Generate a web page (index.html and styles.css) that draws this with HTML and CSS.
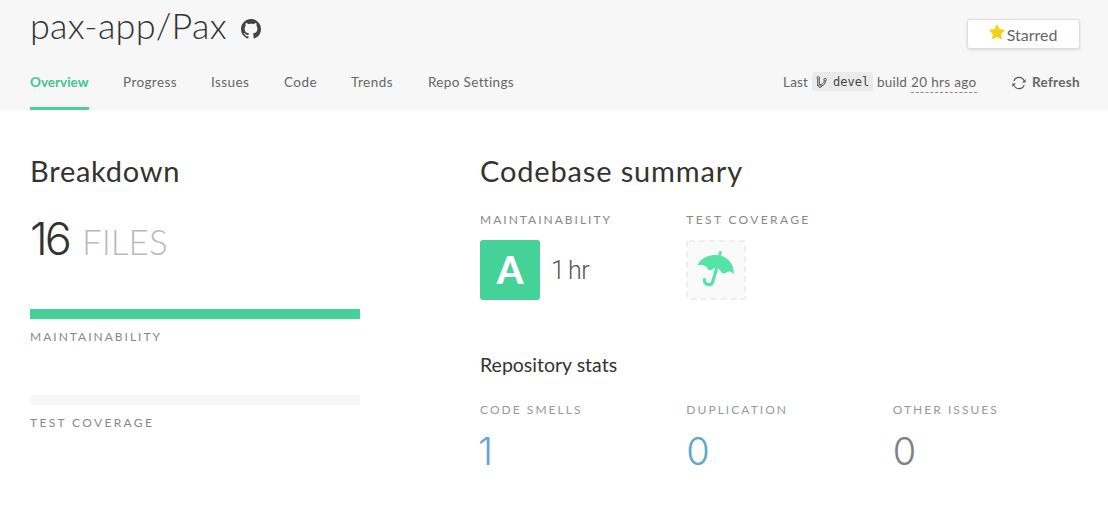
FILE: index.html
```html
<!DOCTYPE html>
<html lang="en">
<head>
<meta charset="utf-8">
<title>pax-app/Pax</title>
<link rel="stylesheet" href="styles.css">
</head>
<body>
<header class="header">
  <div class="title-row">
    <h1 class="repo"><span class="repo-name">pax-app/Pax</span>
      <svg class="github" viewBox="0 0 16 16"><path fill="#444" d="M8 0C3.58 0 0 3.58 0 8c0 3.54 2.29 6.53 5.47 7.59.4.07.55-.17.55-.38 0-.19-.01-.82-.01-1.49-2.01.37-2.53-.49-2.69-.94-.09-.23-.48-.94-.82-1.13-.28-.15-.68-.52-.01-.53.63-.01 1.08.58 1.23.82.72 1.21 1.87.87 2.33.66.07-.52.28-.87.51-1.07-1.78-.2-3.64-.89-3.64-3.95 0-.87.31-1.59.82-2.15-.08-.2-.36-1.02.08-2.12 0 0 .67-.21 2.2.82.64-.18 1.32-.27 2-.27s1.36.09 2 .27c1.53-1.04 2.2-.82 2.2-.82.44 1.1.16 1.92.08 2.12.51.56.82 1.27.82 2.15 0 3.07-1.87 3.75-3.65 3.95.29.25.54.73.54 1.48 0 1.07-.01 1.93-.01 2.2 0 .21.15.46.55.38A8.01 8.01 0 0 0 16 8c0-4.42-3.58-8-8-8z"/></svg>
    </h1>
    <button class="starred"><svg class="star" viewBox="0 0 16 16"><path fill="#f3d012" stroke="#f3d012" stroke-width="1.2" stroke-linejoin="round" d="M8 1.2l2.1 4.5 4.9.6-3.6 3.4.9 4.9L8 12.2l-4.3 2.4.9-4.9L1 6.3l4.9-.6z"/></svg><span>Starred</span></button>
  </div>
  <div class="nav-row">
    <nav class="tabs">
      <a class="tab active">Overview</a><a class="tab progress">Progress</a><a class="tab issues">Issues</a><a class="tab code">Code</a><a class="tab trends">Trends</a><a class="tab settings">Repo Settings</a>
    </nav>
    <div class="build">
      <span class="last">Last</span>
      <span class="branch"><svg class="fork" viewBox="0 0 11 12" fill="none" stroke="#555" stroke-width="1"><circle cx="2.300" cy="1.900" r="1.300"/><circle cx="9.100" cy="3.700" r="1.300"/><circle cx="4" cy="10" r="1.400"/><path d="M1.700 3.200V10M3.300 3.200V8.700M9.400 5C9.400 8.200 7.600 9.300 5.400 10M8.200 5C7.800 7.300 6.400 8 4.600 8.700"/></svg>devel</span>
      <span class="word">build</span>
      <span class="ago">20 hrs ago</span>
      <a class="refresh"><svg class="cycle" viewBox="0 0 14 14" fill="none" stroke="#555" stroke-width="1.1"><path d="M1.800 5A5.500 5.500 0 0 1 12 4.600M12.200 9A5.500 5.500 0 0 1 2 9.400"/><path fill="#555" stroke="none" d="M13.600 2.900v3.500h-3.600zM.4 11.100V7.600H4z"/></svg><span>Refresh</span></a>
    </div>
  </div>
</header>
<main class="main">
  <section class="breakdown">
    <h2 class="heading">Breakdown</h2>
    <p class="files"><span class="count">16</span><span class="unit">FILES</span></p>
    <div class="bar full"></div>
    <p class="label maint">MAINTAINABILITY</p>
    <div class="bar"></div>
    <p class="label cov">TEST COVERAGE</p>
  </section>
  <section class="summary">
    <h2 class="heading codebase">Codebase summary</h2>
    <div class="grid">
      <div>
        <p class="label maint">MAINTAINABILITY</p>
        <div class="rating"><span class="grade">A</span><span class="time">1 hr</span></div>
      </div>
      <div>
        <p class="label cov">TEST COVERAGE</p>
        <div class="umbrella-box"><svg viewBox="0 0 60 60" width="60" height="60"><rect x="1" y="1" width="58" height="58" rx="2" fill="#fafafa" stroke="#eee" stroke-width="2" stroke-dasharray="6 4"/><path fill="#55e3a7" d="M11.300 25.500C15 17.500 23 14 32.500 15.200l.4-1.700a1.600 1.600 0 1 1 2.300.6l-.4 1.700C43.500 18.500 48.500 25.500 47.700 34.500 46 31.500 43.500 30.700 40.500 32.500 38.500 34 36.500 34 35.300 32.300 33.500 28 29.500 26.600 26.500 29.300 24.500 31 22.500 30.500 21.500 28.300 19.500 24.500 14.500 23.800 11.300 25.500z"/><path fill="none" stroke="#55e3a7" stroke-width="3.200" stroke-linecap="round" d="M30.300 29.500L26.700 41.800C25.300 46.300 18 45.300 18.500 39.500"/></svg></div>
      </div>
    </div>
    <h3 class="subheading">Repository stats</h3>
    <div class="grid">
      <div><p class="label light smells">CODE SMELLS</p><p class="stat one">1</p></div>
      <div><p class="label light dup">DUPLICATION</p><p class="stat">0</p></div>
      <div><p class="label light other">OTHER ISSUES</p><p class="stat gray">0</p></div>
    </div>
  </section>
</main>
</body>
</html>
```

FILE: styles.css
```css
* { box-sizing: border-box; }
body { margin: 0; background: #fff; color: #333; font-family: Lato, "Open Sans", sans-serif; font-size: 13.5px; }
h1, h2, h3, p { margin: 0; font-weight: 400; white-space: nowrap; }
.header { height: 110px; background: #f7f7f7; padding: 0 28px 0 30px; }
.title-row { height: 55px; display: flex; justify-content: space-between; align-items: flex-start; }
.repo { display: flex; align-items: center; height: 50px; font-size: 36px; line-height: 50px; font-weight: 300; letter-spacing: .25px; }
.repo-name { width: 211px; }
.github { width: 20px; height: 20px; margin-top: 8px; }
.starred { display: flex; align-items: center; justify-content: center; width: 113px; height: 30px; margin-top: 19px; padding: 0; border: 1px solid #ddd; border-radius: 3px; background: #fff; box-shadow: 0 1px 3px rgba(0,0,0,.12); font: 16px Lato, sans-serif; color: #666; }
.star { width: 16px; height: 16px; margin: -5px 2px 0 -1px; }
.nav-row { height: 55px; display: flex; justify-content: space-between; color: #666; line-height: 55px; white-space: nowrap; }
.tabs { display: flex; gap: 34px; }
.tab { height: 55px; }
.active { width: 59px; border-bottom: 3px solid #45d298; color: #3fc88e; font-weight: 700; }
.progress { width: 54px; letter-spacing: .45px; }
.progress, .issues { letter-spacing: .4px; }
.issues { width: 39px; }
.code { width: 33px; letter-spacing: .45px; }
.trends { width: 43px; letter-spacing: .5px; }
.settings { letter-spacing: .35px; }
.build { display: flex; align-items: center; }
.last { width: 29px; letter-spacing: .2px; }
.branch { display: flex; align-items: center; width: 61px; height: 19px; padding-left: 4px; margin: -2px 4px 0 0; background: #ebebeb; border-radius: 3px; color: #444; font: 12px "DejaVu Sans Mono", monospace; }
.fork { width: 11px; height: 12px; margin-right: 6px; }
.word { width: 34px; letter-spacing: .2px; }
.ago { width: 66px; height: 20px; line-height: 18px; border-bottom: 1px dashed #888; margin-top: 1px; letter-spacing: .35px; }
.refresh { display: flex; align-items: center; width: 68px; margin-left: 35px; font-weight: 700; color: #666; letter-spacing: .3px; }
.cycle { width: 14px; height: 14px; margin-right: 6px; }
.main { display: grid; grid-template-columns: 450px 1fr; padding: 40px 0 0 30px; }
.breakdown { width: 330px; }
.heading { height: 42px; line-height: 42px; font-size: 29px; letter-spacing: .75px; }
.codebase { letter-spacing: .85px; }
.files { display: flex; align-items: baseline; height: 117px; padding-top: 17px; line-height: 60px; }
.count { width: 52px; font: 300 45px/60px Inter, sans-serif; letter-spacing: -3px; }
.unit { font-size: 35px; font-weight: 300; color: #bbb; }
.bar { height: 10px; background: #f7f7f7; }
.full { background: #45d298; }
.label { height: 16px; line-height: 16px; font-size: 12px; letter-spacing: 2px; color: #888; }
.cov { letter-spacing: 2.35px; }
.breakdown .label { margin: 10px 0 50px; }
.grid { display: grid; grid-template-columns: repeat(3, 206.33px); }
.summary .label { margin-top: 20px; }
.rating { display: flex; align-items: center; margin-top: 12px; }
.grade { width: 60px; height: 60px; background: #45d298; border-radius: 3px; color: #fff; font-weight: 900; font-size: 38px; line-height: 59px; text-align: center; }
.time { margin-left: 11px; font: 300 25px Roboto, sans-serif; letter-spacing: -.5px; word-spacing: -2px; color: #555; }
.umbrella-box { height: 60px; margin-top: 12px; }
.subheading { height: 30px; margin-top: 50px; line-height: 30px; font-size: 19.5px; }
.summary .light { margin-top: 22px; color: #999; letter-spacing: 2.05px; }
.stat { height: 50px; margin-top: 8px; font: 300 38px/50px Inter, sans-serif; color: #5da7d3; }
.one { margin-left: -2px; }
.gray { color: #808080; }
```
